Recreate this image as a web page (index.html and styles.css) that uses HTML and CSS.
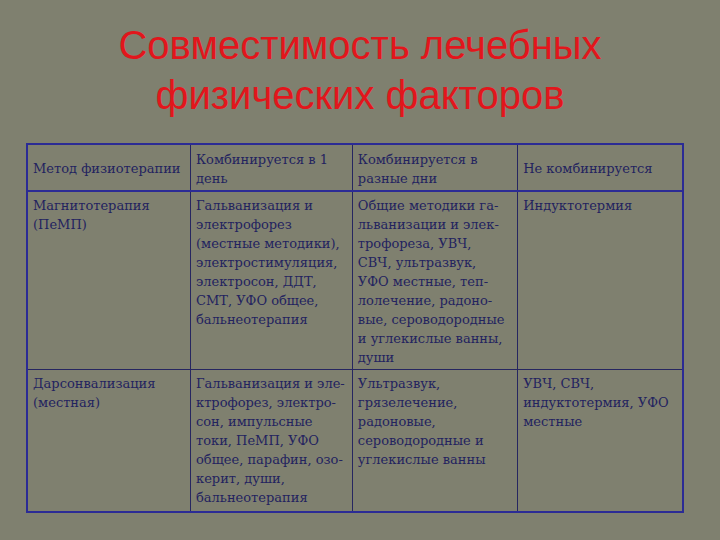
FILE: index.html
```html
<!DOCTYPE html>
<html lang="ru">
<head>
<meta charset="utf-8">
<link rel="stylesheet" href="styles.css">
</head>
<body>
<div class="slide">
  <h1 class="title">Совместимость лечебных<br>физических факторов</h1>
  <table class="grid">
    <colgroup>
      <col class="c1"><col class="c2"><col class="c3"><col class="c4">
    </colgroup>
    <tr class="head">
      <td>Метод физиотерапии</td>
      <td>Комбинируется в 1<br>день</td>
      <td>Комбинируется в<br>разные дни</td>
      <td>Не комбинируется</td>
    </tr>
    <tr class="r1">
      <td>Магнитотерапия<br>(ПеМП)</td>
      <td>Гальванизация и<br>электрофорез<br>(местные методики),<br>электростимуляция,<br>электросон, ДДТ,<br>СМТ, УФО общее,<br>бальнеотерапия</td>
      <td>Общие методики га-<br>льванизации и элек-<br>трофореза, УВЧ,<br>СВЧ, ультразвук,<br>УФО местные, теп-<br>лолечение, радоно-<br>вые, сероводородные<br>и углекислые ванны,<br>души</td>
      <td>Индуктотермия</td>
    </tr>
    <tr class="r2">
      <td>Дарсонвализация<br>(местная)</td>
      <td>Гальванизация и эле-<br>ктрофорез, электро-<br>сон, импульсные<br>токи, ПеМП, УФО<br>общее, парафин, озо-<br>керит, души,<br>бальнеотерапия</td>
      <td>Ультразвук,<br>грязелечение,<br>радоновые,<br>сероводородные и<br>углекислые ванны</td>
      <td>УВЧ, СВЧ,<br>индуктотермия, УФО<br>местные</td>
    </tr>
  </table>
</div>
</body>
</html>
```
FILE: styles.css
```css
html, body {
  margin: 0;
  padding: 0;
  background: #7f806f;
}
.slide {
  width: 720px;
  height: 540px;
  padding-top: 20px;
  box-sizing: border-box;
}
.title {
  margin: 0;
  font-family: "Liberation Sans", Arial, sans-serif;
  font-weight: normal;
  font-size: 40px;
  line-height: 50px;
  color: #e2161c;
  text-align: center;
}
.grid {
  margin: 23px 0 0 26px;
  width: 658px;
  border-collapse: collapse;
  border: 2px solid #2b2b95;
  font-family: "DejaVu Serif", "Liberation Serif", serif;
  font-size: 13px;
  line-height: 19px;
  color: #23235f;
}
.c1 { width: 164px; }
.c2 { width: 162px; }
.c3 { width: 166px; }
.c4 { width: 166px; }
.grid td {
  border: 1px solid #262660;
  padding: 4px 5px 2px 5px;
  vertical-align: top;
  text-align: left;
}
.head td {
  vertical-align: middle;
  height: 39px;
  border-bottom: 2px solid #2b2b95;
}
.r2 td { height: 135px; }
```
